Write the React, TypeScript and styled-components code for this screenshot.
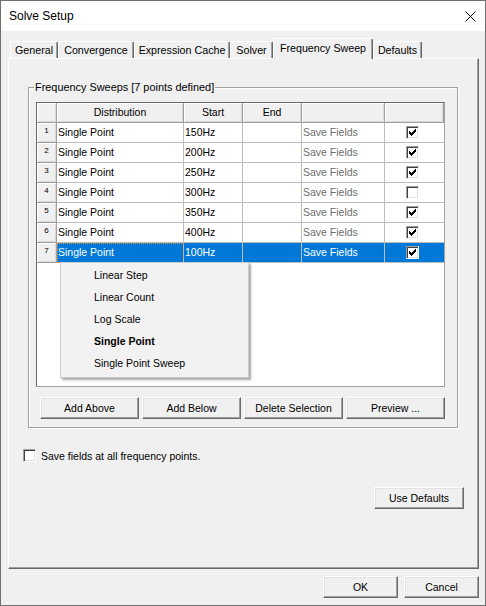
import React from 'react';
import styled, { createGlobalStyle } from 'styled-components';

const GlobalStyle = createGlobalStyle`
  html, body { margin: 0; padding: 0; background: #4b5a33; }
  body { font-family: "Liberation Sans", Arial, sans-serif; font-size: 10.5px; color: #000; }
  * { box-sizing: border-box; }
`;

const Window = styled.div`
  width: 486px;
  height: 606px;
  border: 1px solid #707070;
  background: #f0f0f0;
  display: flex;
  flex-direction: column;
`;

const TitleBar = styled.div`
  height: 30px;
  background: #fff;
  display: flex;
  align-items: center;
  justify-content: space-between;
  padding-left: 8px;
  font-size: 12px;
`;

const CloseButton = styled.div`
  width: 30px;
  height: 30px;
  display: flex;
  align-items: center;
  justify-content: center;
`;

const Body = styled.div`
  flex: 1;
  display: flex;
  flex-direction: column;
  padding: 7px 6px 6px 7px;
`;

const TabStrip = styled.div`
  height: 20px;
  display: flex;
  align-items: flex-end;
  padding-left: 2px;
`;

const Tab = styled.div<{ $active?: boolean; $w: number }>`
  width: ${p => p.$w}px;
  height: ${p => (p.$active ? 21 : 17)}px;
  margin-bottom: ${p => (p.$active ? -1 : 0)}px;
  position: relative;
  z-index: ${p => (p.$active ? 1 : 0)};
  background: #f0f0f0;
  border-top: 1px solid #fff;
  border-left: 1px solid #fff;
  border-right: 1px solid #696969;
  box-shadow: inset -1px 0 0 #a0a0a0;
  border-radius: 2px 2px 0 0;
  display: flex;
  align-items: center;
  justify-content: center;
  padding-bottom: ${p => (p.$active ? 3 : 0)}px;
  white-space: nowrap;
  font-size: 10.7px;
`;

const Page = styled.div`
  height: 511px;
  border-top: 1px solid #fff;
  border-left: 1px solid #fff;
  border-right: 1px solid #696969;
  border-bottom: 1px solid #696969;
  box-shadow: inset -1px -1px 0 #a0a0a0;
  display: flex;
  flex-direction: column;
`;

const Group = styled.div`
  position: relative;
  margin: 28px 20px 0 19px;
  border: 1px solid #a0a0a0;
  box-shadow: inset 1px 1px 0 #fff, 1px 1px 0 #fff;
  padding: 14px 0 8px 7px;
`;

const GroupLabel = styled.span`
  position: absolute;
  top: -7px;
  left: 5px;
  padding: 0 1px;
  line-height: 13px;
  font-size: 10.9px;
  background: #f0f0f0;
`;

const Grid = styled.div`
  position: relative;
  width: 409px;
  height: 285px;
  background: #fff;
  border: 1px solid;
  border-color: #696969 #a0a0a0 #a0a0a0 #696969;
`;

const COLS = '20px 127px 59px 59px 83px 59px';

const Row = styled.div<{ $sel?: boolean }>`
  display: grid;
  grid-template-columns: ${COLS};
  height: 20px;
  background: ${p => (p.$sel ? '#0078d7' : '#fff')};
  color: ${p => (p.$sel ? '#fff' : '#000')};
`;

const HeaderCell = styled.div`
  background: #f0f0f0;
  border-right: 1px solid #a0a0a0;
  border-bottom: 1px solid #a0a0a0;
  box-shadow: inset 1px 1px 0 #fff, inset -1px -1px 0 #d8d8d8;
  display: flex;
  align-items: center;
  justify-content: center;
  padding-bottom: 1px;
`;

const RowHead = styled.div`
  background: #f0f0f0;
  border-right: 1px solid #a0a0a0;
  border-bottom: 1px solid #a0a0a0;
  box-shadow: inset 1px 1px 0 #fff, inset -1px -1px 0 #d8d8d8;
  display: flex;
  justify-content: center;
  padding-top: 3px;
  font-size: 8px;
  line-height: 10px;
  color: #000;
`;

const Cell = styled.div<{ $gray?: boolean; $sel?: boolean; $focus?: boolean }>`
  border-right: 1px solid #bdbdbd;
  border-bottom: 1px solid #bdbdbd;
  padding: 0 0 1px 1px;
  display: flex;
  align-items: center;
  white-space: nowrap;
  overflow: hidden;
  color: ${p => (p.$sel ? '#fff' : p.$gray ? '#6d6d6d' : '#000')};
  outline: ${p => (p.$focus ? '1px dotted #e89a50' : 'none')};
  outline-offset: -1px;
`;

const CheckCell = styled.div`
  border-bottom: 1px solid #bdbdbd;
  display: flex;
  align-items: center;
  padding-left: 21px;
`;

const CheckBox = styled.div`
  width: 13px;
  height: 13px;
  background: #fff;
  border: 1px solid;
  border-color: #a0a0a0 #fff #fff #a0a0a0;
  box-shadow: inset 1px 1px 0 #404040, inset -1px -1px 0 #e3e3e3;
  display: flex;
  align-items: center;
  justify-content: center;
  flex: none;
`;

const Popup = styled.div`
  position: absolute;
  left: 23px;
  top: 159px;
  width: 189px;
  height: 116px;
  background: #f2f2f2;
  border: 1px solid #cccccc;
  box-shadow: 2px 2px 2px rgba(0, 0, 0, 0.35);
  padding: 1px 0 3px 33px;
  z-index: 2;
`;

const PopupItem = styled.div<{ $bold?: boolean }>`
  height: 22px;
  display: flex;
  align-items: center;
  font-weight: ${p => (p.$bold ? 'bold' : 'normal')};
`;

const ButtonRow = styled.div`
  display: flex;
  gap: 3px;
  margin: 10px 0 0 4px;
`;

const Button = styled.div<{ $w: number }>`
  width: ${p => p.$w}px;
  height: 22px;
  flex: none;
  background: #f0f0f0;
  border: 1px solid;
  border-color: #fff #696969 #696969 #fff;
  box-shadow: inset -1px -1px 0 #a0a0a0, inset 1px 1px 0 #e3e3e3;
  display: flex;
  align-items: center;
  justify-content: center;
  white-space: nowrap;
`;

const CheckRow = styled.div`
  display: flex;
  align-items: center;
  gap: 5px;
  margin: 21px 0 0 14px;
  height: 13px;
`;

const RightButton = styled(Button)`
  align-self: flex-end;
  margin: 25px 14px 0 0;
`;

const Footer = styled.div`
  display: flex;
  justify-content: flex-end;
  gap: 6px;
  margin-top: 7px;
`;

const Check = () => (
  <svg width="7" height="7" viewBox="0 0 7 7" shapeRendering="crispEdges">
    <path
      d="M6 0h1v1h-1z M5 1h2v1h-2z M0 2h1v1h-1z M4 2h3v1h-3z M0 3h2v1h-2z M3 3h3v1h-3z M0 4h5v1h-5z M1 5h3v1h-3z M2 6h1v1h-1z"
      fill="#000"
    />
  </svg>
);

const rows: [string, boolean][] = [
  ['150Hz', true],
  ['200Hz', true],
  ['250Hz', true],
  ['300Hz', false],
  ['350Hz', true],
  ['400Hz', true],
  ['100Hz', true],
];

const tabs: [string, number][] = [
  ['General', 48],
  ['Convergence', 76],
  ['Expression Cache', 96],
  ['Solver', 43],
  ['Frequency Sweep', 100],
  ['Defaults', 49],
];

export default function App() {
  return (
    <>
      <GlobalStyle />
      <Window>
        <TitleBar>
          <span>Solve Setup</span>
          <CloseButton>
            <svg width="11" height="11" viewBox="0 0 11 11">
              <path d="M0.5 0.5 L10.5 10.5 M10.5 0.5 L0.5 10.5" stroke="#000" strokeWidth="1" />
            </svg>
          </CloseButton>
        </TitleBar>
        <Body>
          <TabStrip>
            {tabs.map(([t, w]) => (
              <Tab key={t} $w={w} $active={t === 'Frequency Sweep'}>
                {t}
              </Tab>
            ))}
          </TabStrip>
          <Page>
            <Group>
              <GroupLabel>Frequency Sweeps [7 points defined]</GroupLabel>
              <Grid>
                <Row>
                  <HeaderCell />
                  <HeaderCell>Distribution</HeaderCell>
                  <HeaderCell>Start</HeaderCell>
                  <HeaderCell>End</HeaderCell>
                  <HeaderCell />
                  <HeaderCell />
                </Row>
                {rows.map(([start, checked], i) => {
                  const sel = i === 6;
                  return (
                    <Row key={i} $sel={sel}>
                      <RowHead>{i + 1}</RowHead>
                      <Cell $sel={sel} $focus={sel}>Single Point</Cell>
                      <Cell $sel={sel}>{start}</Cell>
                      <Cell $sel={sel} />
                      <Cell $sel={sel} $gray>
                        Save Fields
                      </Cell>
                      <CheckCell>
                        <CheckBox>{checked && <Check />}</CheckBox>
                      </CheckCell>
                    </Row>
                  );
                })}
                <Popup>
                  <PopupItem>Linear Step</PopupItem>
                  <PopupItem>Linear Count</PopupItem>
                  <PopupItem>Log Scale</PopupItem>
                  <PopupItem $bold>Single Point</PopupItem>
                  <PopupItem>Single Point Sweep</PopupItem>
                </Popup>
              </Grid>
              <ButtonRow>
                <Button $w={99}>Add Above</Button>
                <Button $w={99}>Add Below</Button>
                <Button $w={99}>Delete Selection</Button>
                <Button $w={99}>Preview ...</Button>
              </ButtonRow>
            </Group>
            <CheckRow>
              <CheckBox />
              <span>Save fields at all frequency points.</span>
            </CheckRow>
            <RightButton $w={90}>Use Defaults</RightButton>
          </Page>
          <Footer>
            <Button $w={75}>OK</Button>
            <Button $w={75}>Cancel</Button>
          </Footer>
        </Body>
      </Window>
    </>
  );
}
